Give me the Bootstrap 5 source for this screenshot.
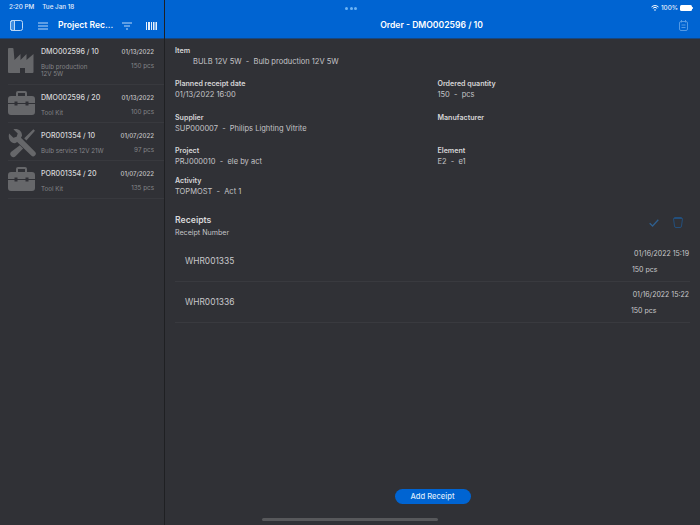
<!DOCTYPE html>
<html lang="en">
<head>
<meta charset="UTF-8">
<title>Order - DMO002596 / 10</title>
<link href="https://cdn.jsdelivr.net/npm/bootstrap@5.3.3/dist/css/bootstrap.min.css" rel="stylesheet">
<style>
html, body { height: 525px; overflow: hidden; }
body { background: #303136; color: #d6d6d8; font-family: Inter, "Liberation Sans", sans-serif; font-size: 8px; position: relative; }
.app-shell { height: 525px; }
.side-pane { width: 165px; border-right: 1px solid #1f2023; flex: none; }
.main-pane { min-width: 0; }
.blue-bar { height: 39px; background: #0064d2; color: #fff; border-bottom: 1px solid #17467f; flex: none; }
.status-row { height: 13px; padding-top: 2px; font-size: 6.3px; font-weight: 500; color: #e6eefa; line-height: 10px; }
.nav-row { height: 25px; }
.side-title { font-size: 8.6px; font-weight: 600; white-space: nowrap; margin: 0 0 0 10px; width: 64px; }
.main-title { font-size: 8.6px; font-weight: 600; }
.grab-dots { gap: 1.5px; margin-top: 1px; margin-left: 180px; }
.grab-dots i { width: 3px; height: 3px; border-radius: 50%; background: #6db4f5; display: block; }
.order-row { border-bottom: 1px solid #38393e; padding: 0 10px 0 0; margin-left: 8px; height: 38px; }
.order-row.tall-row { height: 46px; }
.order-icon { width: 27px; height: 27px; flex: none; margin-right: 6px; fill: #66676a; overflow: visible; }
.icon-cut { fill: #303136; }
.order-text { min-width: 0; padding-top: 8px; }
.order-code { font-size: 7.1px; color: #d8d8da; font-weight: 500; line-height: 10px; height: 16px; }
.order-date { font-size: 6.1px; color: #c6c6c8; font-weight: 500; line-height: 10px; }
.order-desc { font-size: 6.2px; color: #848588; line-height: 7px; }
.order-qty { font-size: 6.3px; color: #848588; line-height: 7px; }
.detail-pane { padding: 6px 10px 0; flex: 1 1 auto; min-height: 0; }
.field-label { font-size: 7.1px; font-weight: 600; color: #d6d6d8; line-height: 11px; }
.field-value { font-size: 7.5px; color: #c4c4c7; line-height: 11px; }
.field-gap { height: 34px; }
.short-gap { height: 33px; }
.last-gap { height: 30px; }
.item-value { padding-left: 18px; }
.right-col { padding-left: 5px; }
.receipts-head { font-size: 8.7px; font-weight: 600; color: #d8d8da; line-height: 14px; margin-top: 16px; }
.receipt-col { font-size: 7.1px; color: #c4c4c7; line-height: 12px; }
.receipt-row { border-bottom: 1px solid #393a3f; height: 41px; padding: 0 0 0 10px; }
.receipt-code { font-size: 8.4px; color: #c8c8cb; }
.receipt-right { font-size: 7px; color: #c8c8cb; line-height: 11px; width: 58px; margin-right: 1px; white-space: nowrap; }
.head-tools { gap: 14px; margin-right: 7px; margin-top: 4px; padding-top: 16px; }
.btn.add-receipt { background: #0064d2; color: #dbe9fb; border: 0; border-radius: 8px; width: 76px; height: 15px; padding: 0; font-size: 7.6px; font-weight: 500; line-height: 15px; }
.button-row { padding-bottom: 21px; }
.home-bar { position: absolute; left: 262px; top: 518px; width: 176px; height: 3px; border-radius: 2px; background: #57585b; }
</style>
</head>
<body>
<div class="app-shell d-flex">

  <div class="side-pane d-flex flex-column">
    <div class="blue-bar">
      <div class="status-row d-flex gap-2" style="padding-left:9px"><span>2:20 PM</span><span>Tue Jan 18</span></div>
      <div class="nav-row d-flex align-items-center" style="padding-left:10px">
        <svg width="13" height="11" viewBox="0 0 13 11" fill="none" stroke="#bcd8f7" stroke-width="1"><path d="M2.5 .5h2v10h-2a2 2 0 0 1-2-2v-6a2 2 0 0 1 2-2z" fill="#3f8de0"/><rect x=".5" y=".5" width="12" height="10" rx="2"/></svg>
        <svg style="margin-left:15px" width="10" height="8" viewBox="0 0 10 8" fill="none" stroke="#bcd8f7" stroke-width="1"><path d="M0 1h10M0 4h10M0 7h10"/></svg>
        <div class="side-title">Project Rec...</div>
        <svg width="10" height="8" viewBox="0 0 10 8" fill="none" stroke="#bcd8f7" stroke-width="1"><path d="M0 1h10M2 4h6M4 7h2"/></svg>
        <svg style="margin-left:14px" width="11" height="8" viewBox="0 0 11 8" fill="#e4effc"><rect width="1" height="8"/><rect x="2" width="2" height="8"/><rect x="5" width="1" height="8"/><rect x="7" width="1.5" height="8"/><rect x="9.5" width="1.5" height="8"/></svg>
      </div>
    </div>

    <div class="order-row tall-row d-flex">
      <svg class="order-icon mt-2" viewBox="0 0 27 27"><path d="M0 2a1 1 0 0 1 1-1h3.500a1 1 0 0 1 1 1l1 11 6-6v6l6-6v6l7-6v18a1 1 0 0 1-1 1H17v-5h-5v5H1a1 1 0 0 1-1-1z"/></svg>
      <div class="order-text flex-grow-1">
        <div class="d-flex justify-content-between"><span class="order-code">DMO002596 / 10</span><span class="order-date">01/13/2022</span></div>
        <div class="d-flex justify-content-between"><span class="order-desc">Bulb production<br>12V 5W</span><span class="order-qty">150 pcs</span></div>
      </div>
    </div>

    <div class="order-row d-flex">
      <svg class="order-icon mt-1" viewBox="0 0 27 27"><path d="M8 7V4a2 2 0 0 1 2-2h7a2 2 0 0 1 2 2v3h5a3 3 0 0 1 3 3v13a3 3 0 0 1-3 3H3a3 3 0 0 1-3-3V10a3 3 0 0 1 3-3zm2 0h7V4h-7z" fill-rule="evenodd"/><rect class="icon-cut" y="14" width="27" height="1"/><rect class="icon-cut" x="6.500" y="12.500" width="3" height="4"/><rect class="icon-cut" x="17.500" y="12.500" width="3" height="4"/></svg>
      <div class="order-text flex-grow-1">
        <div class="d-flex justify-content-between"><span class="order-code">DMO002596 / 20</span><span class="order-date">01/13/2022</span></div>
        <div class="d-flex justify-content-between"><span class="order-desc">Tool Kit</span><span class="order-qty">100 pcs</span></div>
      </div>
    </div>

    <div class="order-row d-flex">
      <svg class="order-icon mt-1" viewBox="0 -1 25 25"><path d="M1 5l4 4 3-1 1-3-4-4c4-1 8 1 8 6l-1 2 13 13a2.200 2.200 0 0 1-3.500 3.500L8.500 13l-2 1c-5 0-6.500-5-5.500-9z"/><path d="M23.500 1l1.500 1.500-8 9-2-2zM11 16l3 3-7 7a2 2 0 0 1-4-4z"/></svg>
      <div class="order-text flex-grow-1">
        <div class="d-flex justify-content-between"><span class="order-code">POR001354 / 10</span><span class="order-date">01/07/2022</span></div>
        <div class="d-flex justify-content-between"><span class="order-desc">Bulb service 12V 21W</span><span class="order-qty">97 pcs</span></div>
      </div>
    </div>

    <div class="order-row d-flex">
      <svg class="order-icon mt-1" viewBox="0 0 27 27"><path d="M8 7V4a2 2 0 0 1 2-2h7a2 2 0 0 1 2 2v3h5a3 3 0 0 1 3 3v13a3 3 0 0 1-3 3H3a3 3 0 0 1-3-3V10a3 3 0 0 1 3-3zm2 0h7V4h-7z" fill-rule="evenodd"/><rect class="icon-cut" y="14" width="27" height="1"/><rect class="icon-cut" x="6.500" y="12.500" width="3" height="4"/><rect class="icon-cut" x="17.500" y="12.500" width="3" height="4"/></svg>
      <div class="order-text flex-grow-1">
        <div class="d-flex justify-content-between"><span class="order-code">POR001354 / 20</span><span class="order-date">01/07/2022</span></div>
        <div class="d-flex justify-content-between"><span class="order-desc">Tool Kit</span><span class="order-qty">135 pcs</span></div>
      </div>
    </div>
  </div>

  <div class="main-pane d-flex flex-column flex-grow-1">
    <div class="blue-bar">
      <div class="status-row d-flex justify-content-between align-items-center">
        <span class="grab-dots d-flex"><i></i><i></i><i></i></span>
        <span class="d-flex align-items-center" style="gap:2px;padding-right:7px">
          <svg width="8" height="6" viewBox="0 0 8 6" fill="none" stroke="#fff" stroke-width="1"><path d="M.5 2a5 5 0 0 1 7 0M1.800 3.300a3.200 3.200 0 0 1 4.400 0"/><circle cx="4" cy="5" r=".8" fill="#fff" stroke="none"/></svg>
          <span>100%</span>
          <svg width="13" height="6" viewBox="0 0 13 6" fill="#fff"><rect width="12" height="6" rx="1.500"/><rect x="12.200" y="2" width=".8" height="2"/></svg>
        </span>
      </div>
      <div class="nav-row d-flex align-items-center">
        <div class="main-title flex-grow-1 text-center" style="padding-left:19px">Order - DMO002596 / 10</div>
        <svg style="margin-right:12px" width="9" height="11" viewBox="0 0 9 11" fill="none" stroke="#5c9fe6" stroke-width=".9"><rect x=".5" y="1.500" width="8" height="9" rx="1.500"/><path d="M2.500 0v2.500M6.500 0v2.500M2.500 5h4M2.500 7.500h4"/></svg>
      </div>
    </div>

    <div class="detail-pane d-flex flex-column">
      <div class="field-label">Item</div>
      <div class="field-value item-value">BULB 12V 5W&nbsp; -&nbsp; Bulb production 12V 5W</div>
      <div style="height:11px"></div>

      <div class="row g-0">
        <div class="col-6 field-gap"><div class="field-label">Planned receipt date</div><div class="field-value">01/13/2022 16:00</div></div>
        <div class="col-6 field-gap right-col"><div class="field-label">Ordered quantity</div><div class="field-value">150&nbsp; -&nbsp; pcs</div></div>
        <div class="col-6 short-gap"><div class="field-label">Supplier</div><div class="field-value">SUP000007&nbsp; -&nbsp; Philips Lighting Vitrite</div></div>
        <div class="col-6 short-gap right-col"><div class="field-label">Manufacturer</div></div>
        <div class="col-6 last-gap"><div class="field-label">Project</div><div class="field-value">PRJ000010&nbsp; -&nbsp; ele by act</div></div>
        <div class="col-6 last-gap right-col"><div class="field-label">Element</div><div class="field-value">E2&nbsp; -&nbsp; e1</div></div>
        <div class="col-12"><div class="field-label">Activity</div><div class="field-value">TOPMOST&nbsp; -&nbsp; Act 1</div></div>
      </div>

      <div class="d-flex justify-content-between align-items-start">
        <div>
          <div class="receipts-head">Receipts</div>
          <div class="receipt-col">Receipt Number</div>
        </div>
        <div class="head-tools d-flex align-items-center">
          <svg width="10" height="8" viewBox="0 0 10 8" fill="none" stroke="#2f5f8e" stroke-width="1.300"><path d="M.7 4.200 3.600 7 9.300 .8"/></svg>
          <svg width="10" height="11" viewBox="0 0 10 11" fill="none" stroke="#234f7c" stroke-width="1"><path d="M.5 1.500h9L8.500 9a1.500 1.500 0 0 1-1.500 1.500H3A1.500 1.500 0 0 1 1.500 9zM1 1 2 .5h6L9 1"/></svg>
        </div>
      </div>

      <div style="height:2px"></div>
      <div class="receipt-row d-flex align-items-center justify-content-between">
        <span class="receipt-code">WHR001335</span>
        <div class="receipt-right"><div class="text-end" style="margin-bottom:5px">01/16/2022 15:19</div><div style="padding-left:1px">150 pcs</div></div>
      </div>
      <div class="receipt-row d-flex align-items-center justify-content-between">
        <span class="receipt-code">WHR001336</span>
        <div class="receipt-right"><div class="text-end" style="margin-bottom:5px">01/16/2022 15:22</div><div>150 pcs</div></div>
      </div>

      <div class="button-row mt-auto d-flex justify-content-center">
        <button type="button" class="btn add-receipt">Add Receipt</button>
      </div>
    </div>
  </div>
</div>
<div class="home-bar"></div>
<script src="https://cdn.jsdelivr.net/npm/bootstrap@5.3.3/dist/js/bootstrap.bundle.min.js"></script>
</body>
</html>
